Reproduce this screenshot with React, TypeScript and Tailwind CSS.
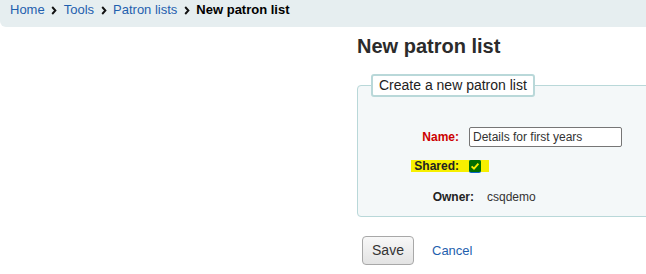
export default function App() {
  const Sep = () => (
    <span className="flex w-[19px] justify-center">
      <svg width="6" height="9" viewBox="0 0 6 9">
        <path d="M1.2 1 L4.4 4.5 L1.2 8" fill="none" stroke="#111" strokeWidth="1.9" />
      </svg>
    </span>
  );
  return (
    <div className="w-[646px] h-[274px] overflow-hidden bg-white font-['Liberation_Sans',Arial,sans-serif] text-[#333]">
      <nav className="h-[27px] w-[700px] rounded-bl-[6px] bg-[#e6eef0] pl-[10px] pt-[2px]">
        <div className="flex items-center text-[13px] leading-[16px]">
          <a className="text-[#1f5fae]">Home</a>
          <Sep />
          <a className="text-[#1f5fae]">Tools</a>
          <Sep />
          <a className="text-[#1f5fae]">Patron lists</a>
          <Sep />
          <span className="font-bold text-black">New patron list</span>
        </div>
      </nav>
      <div className="flex">
        <div className="w-[357px] shrink-0" />
        <main className="w-[420px] shrink-0">
          <h1 className="mt-[7px] text-[20px] font-bold leading-[24px] text-[#2b2b2b]">New patron list</h1>
          <fieldset className="mt-[16px] rounded-[4px] border border-[#b9d8d9] bg-[#f4f8f9] pb-[13px]">
            <legend className="ml-[13px] rounded-[3px] border-2 border-[#b9d8d9] bg-white px-[6px] py-[1px] text-[14px] leading-[17px] text-[#222]">
              Create a new patron list
            </legend>
            <div className="pt-[30px]">
              <div className="flex h-[20px] items-center">
                <label className="w-[101px] text-right text-[12px] font-bold text-[#c00]">Name:</label>
                <input
                  className="ml-[10px] h-[20px] w-[153px] rounded-[2px] border border-[#767676] bg-white px-[3px] text-[12px] text-[#333] outline-none"
                  defaultValue="Details for first years"
                />
              </div>
              <div className="mt-[12px] flex h-[13px] items-center">
                <div className="flex w-[101px] justify-end">
                  <span className="h-[12px] bg-[#f7f000] pl-[3px] text-[12px] font-bold leading-[12px] text-[#222]">Shared:</span>
                </div>
                <span className="flex h-[12px] items-center bg-[#f7f000] pl-[10px] pr-[8px]">
                  <svg width="12" height="13" viewBox="0 0 12 13" className="mt-[1px]">
                    <rect x="0" y="0" width="12" height="13" rx="2" fill="#0b66c8" />
                    <rect x="0" y="0" width="12" height="12" rx="2" fill="#006e00" />
                    <path d="M2.6 6.3 L5 8.7 L9.4 3.6" fill="none" stroke="#f5ef00" strokeWidth="1.9" />
                  </svg>
                </span>
              </div>
              <div className="mt-[18px] flex h-[13px] items-center">
                <span className="w-[116px] text-right text-[12px] font-bold text-[#222]">Owner:</span>
                <span className="ml-[13px] text-[12px] text-[#333]">csqdemo</span>
              </div>
            </div>
          </fieldset>
          <div className="mt-[19px] flex items-center">
            <button className="ml-[5px] h-[29px] w-[52px] rounded-[4px] border border-[#a8a8a8] bg-gradient-to-b from-[#f8f8f8] to-[#e3e3e3] text-[14px] text-[#333]">
              Save
            </button>
            <a className="ml-[18px] text-[13px] text-[#1f5fae]">Cancel</a>
          </div>
        </main>
      </div>
    </div>
  );
}
